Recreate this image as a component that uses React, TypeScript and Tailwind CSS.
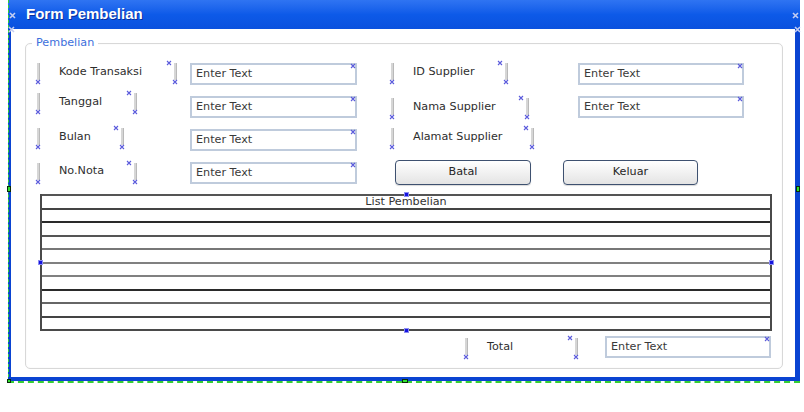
import React from "react";

function Mark({ className }: { className: string }) {
  return (
    <svg className={`absolute ${className}`} width="6" height="6" viewBox="0 0 6 6" aria-hidden="true">
      <path d="M1 1L5 5M5 1L1 5" stroke="#5b5bdc" strokeWidth="1.1" />
    </svg>
  );
}

function Bar({ className = "", top = false }: { className?: string; top?: boolean }) {
  return (
    <span className={`relative block h-[17px] w-[3px] shrink-0 border-r border-[#b9b9b9] bg-[#d6d6d6] ${className}`}>
      {top && <Mark className="-left-[8px] -top-[3px]" />}
      <Mark className="-left-[2px] top-[16px]" />
    </span>
  );
}

function Field({ className = "" }: { className?: string }) {
  return (
    <div className={`relative flex h-[22px] shrink-0 items-center border-2 border-[#bfcbdc] bg-white pl-[4px] text-[#3a3a3a] ${className}`}>
      Enter Text
      <Mark className="-right-[1px] -top-[2px]" />
    </div>
  );
}

function Label({ text, width, barTop, textTop }: { text: string; width: string; barTop: string; textTop: string }) {
  return (
    <div className="flex items-start">
      <Bar className={barTop} />
      <span className={`ml-[19px] leading-[13px] whitespace-nowrap ${width} ${textTop}`}>{text}</span>
      <Bar className={barTop} top />
    </div>
  );
}

const left = [
  { text: "Kode Transaksi", width: "w-[115px]", barTop: "mt-[1px]", textTop: "mt-[3px]" },
  { text: "Tanggal", width: "w-[75px]", barTop: "-mt-[2px]", textTop: "mt-0" },
  { text: "Bulan", width: "w-[62px]", barTop: "mt-0", textTop: "mt-[1.5px]" },
  { text: "No.Nota", width: "w-[75px]", barTop: "mt-[2px]", textTop: "mt-[3px]" },
];

const right = [
  { text: "ID Supplier", width: "w-[92px]", barTop: "mt-[1px]", textTop: "mt-[3px]" },
  { text: "Nama Supplier", width: "w-[113px]", barTop: "mt-[3px]", textTop: "mt-[4.5px]" },
  { text: "Alamat Supplier", width: "w-[118px]", barTop: "mt-0", textTop: "mt-[1.5px]" },
];

const lines = [
  "h-[14px] border-[#555]",
  "h-[13px] border-[#444]",
  "h-[14px] border-[#2a2a2a]",
  "h-[13px] border-[#555]",
  "h-[14px] border-[#777]",
  "h-[13px] border-[#808080]",
  "h-[14px] border-[#808080]",
  "h-[13px] border-[#2a2a2a]",
  "h-[14px] border-[#666]",
  "h-[13px] border-[#444]",
];

function Dot({ className }: { className: string }) {
  return <span className={`absolute h-[5px] w-[5px] border border-[#8c8cf0] bg-[#1414e0] ${className}`} />;
}

function Button({ label, width }: { label: string; width: string }) {
  return (
    <button className={`-mt-[1px] h-[25px] ${width} shrink-0 rounded-[4px] border border-[#3e5170] bg-gradient-to-b from-white to-[#e4e4e4] text-[#262626] shadow-[0_1px_1px_rgba(0,0,0,0.15)]`}>
      {label}
    </button>
  );
}

export default function App() {
  return (
    <div className="relative h-[412px] w-[804px] overflow-hidden bg-white font-['DejaVu_Sans',sans-serif] text-[11.2px] text-[#2e2e2e]">
      <div className="ml-[8px] flex h-[381px] w-[792px] flex-col bg-[#0a44d2]">
        <div className="relative flex h-[29px] shrink-0 items-center bg-gradient-to-b from-[#2f74f2] via-[#0d5ae8] to-[#0a51de] pl-[18px]">
          <span className="font-['Liberation_Sans',sans-serif] text-[15px] font-bold text-white [text-shadow:1px_1px_0_#0a2f9c]">
            Form Pembelian
          </span>
          <svg className="absolute left-[1px] top-[12px]" width="7" height="7" viewBox="0 0 7 7" aria-hidden="true">
            <path d="M1 1L6 6M6 1L1 6" stroke="#c3cdf2" strokeWidth="1.6" />
          </svg>
          <svg className="absolute right-[1px] top-[12px]" width="7" height="7" viewBox="0 0 7 7" aria-hidden="true">
            <path d="M1 1L6 6M6 1L1 6" stroke="#c3cdf2" strokeWidth="1.6" />
          </svg>
        </div>

        <div className="mb-[4px] ml-[3px] mr-[5px] flex flex-1 flex-col bg-white pb-[8px] pl-[14px] pr-[12px] pt-[14px]">
          <div className="relative flex flex-1 flex-col rounded-[5px] border border-[#d8d8d8] pl-[11px] pt-[18px] shadow-[inset_0_0_2px_rgba(0,0,0,0.05)]">
            <span className="absolute -top-[8px] left-[6px] bg-white px-[4px] leading-[14px] text-[#3d6fdc]">Pembelian</span>

            {left.map((row, i) => (
              <div key={row.text} className="flex h-[33px] items-start">
                <div className="w-[153px] shrink-0">
                  <Label {...row} />
                </div>
                <Field className="mt-[1px] w-[167px]" />
                {i < 3 && (
                  <>
                    <div className="ml-[34px] w-[187px] shrink-0">
                      <Label {...right[i]} />
                    </div>
                    {i < 2 && <Field className="mt-[1px] w-[166px]" />}
                  </>
                )}
                {i === 3 && (
                  <>
                    <div className="ml-[38px]">
                      <Button label="Batal" width="w-[136px]" />
                    </div>
                    <div className="ml-[32px]">
                      <Button label="Keluar" width="w-[135px]" />
                    </div>
                  </>
                )}
              </div>
            ))}

            <div className="relative ml-[3px] w-[732px] border-x-2 border-b-2 border-[#4a4a4a]">
              {lines.map((cls, i) => (
                <div key={i} className={`border-t-2 ${cls} flex justify-center`}>
                  {i === 0 && <span className="leading-[12px] text-[#333]">List Pembelian</span>}
                </div>
              ))}
              <Dot className="-top-[2px] left-[362px]" />
              <Dot className="-left-[4px] top-[66px]" />
              <Dot className="-right-[4px] top-[66px]" />
              <Dot className="-bottom-[4px] left-[362px]" />
            </div>

            <div className="mt-[5px] flex items-start">
              <Bar className="ml-[428px] mt-[2px]" />
              <span className="ml-[19px] mt-[4px] w-[88px] leading-[13px]">Total</span>
              <Bar className="mt-[2px]" top />
              <Field className="ml-[27px] w-[166px]" />
            </div>
          </div>
        </div>
      </div>

      <div className="absolute left-[8px] top-0 h-[382px] border-l border-dashed border-[#35d035]" />
      <div className="absolute left-[8px] top-[381px] w-[792px] border-t-2 border-dashed border-[#35d035]" />
      <span className="absolute left-[7px] top-[186px] h-[6px] w-[4px] border border-[#0a2a0a] bg-[#2ee02e]" />
      <span className="absolute left-[796px] top-[186px] h-[6px] w-[4px] border border-[#0a2a0a] bg-[#2ee02e]" />
      <span className="absolute left-[402px] top-[379px] h-[4px] w-[6px] border border-[#0a2a0a] bg-[#2ee02e]" />
      <span className="absolute left-[7px] top-[379px] h-[4px] w-[4px] border border-[#0a2a0a] bg-[#2ee02e]" />
      <svg className="absolute left-[8px] top-[26px]" width="7" height="7" viewBox="0 0 7 7" aria-hidden="true">
        <path d="M1 1L6 6M6 1L1 6" stroke="#c3cdf2" strokeWidth="1.6" />
      </svg>
      <svg className="absolute left-[794px] top-[26px]" width="7" height="7" viewBox="0 0 7 7" aria-hidden="true">
        <path d="M1 1L6 6M6 1L1 6" stroke="#c3cdf2" strokeWidth="1.6" />
      </svg>
    </div>
  );
}
